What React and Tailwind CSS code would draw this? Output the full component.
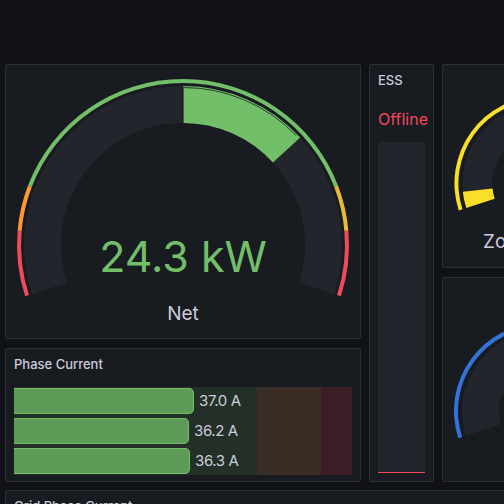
import React from 'react';

// gauge geometry helpers, angle 0 = 12 o'clock, clockwise positive
function pt(cx, cy, r, a) {
  const t = (a * Math.PI) / 180;
  return [cx + r * Math.sin(t), cy - r * Math.cos(t)];
}

function band(cx, cy, r1, r2, a0, a1) {
  const [x0, y0] = pt(cx, cy, r2, a0);
  const [x1, y1] = pt(cx, cy, r2, a1);
  const [x2, y2] = pt(cx, cy, r1, a1);
  const [x3, y3] = pt(cx, cy, r1, a0);
  const large = a1 - a0 > 180 ? 1 : 0;
  return `M${x0} ${y0} A${r2} ${r2} 0 ${large} 1 ${x1} ${y1} L${x2} ${y2} A${r1} ${r1} 0 ${large} 0 ${x3} ${y3} Z`;
}

function arcLine(cx, cy, r, a0, a1) {
  const [x0, y0] = pt(cx, cy, r, a0);
  const [x1, y1] = pt(cx, cy, r, a1);
  return `M${x0} ${y0} A${r} ${r} 0 0 1 ${x1} ${y1}`;
}

const FONT = "Inter, 'Liberation Sans', sans-serif";

function Panel({ title, className = '', children }) {
  return (
    <div className={`bg-[#181b1f] border border-[#2b2e33] rounded-[2px] overflow-hidden flex flex-col ${className}`}>
      {title && (
        <div className="h-8 shrink-0 flex items-center px-2 text-[13px] font-medium text-[#ccccdc] whitespace-nowrap">
          {title}
        </div>
      )}
      {children}
    </div>
  );
}

function NetGauge() {
  const cx = 177;
  const cy = 180;
  const segs = [
    [-108, -85, '#f2495c'],
    [-85, -69, '#ff9830'],
    [-69, 69, '#73bf69'],
    [69, 85, '#eab839'],
    [85, 108, '#f2495c'],
  ];
  return (
    <svg width="354" height="273" viewBox="0 0 354 273">
      {segs.map(([a0, a1, c]) => (
        <path key={a0} d={band(cx, cy, 162, 166, a0, a1)} fill={c} />
      ))}
      <path d={band(cx, cy, 122, 159, -108, 108)} fill="#22252b" />
      <path d={band(cx, cy, 122, 159, 0, 47.5)} fill="#73bf69" />
      <path d={arcLine(cx, cy, 157.5, 0, 46)} stroke="#1a1d21" strokeWidth="0.8" fill="none" />
      <line x1={cx} y1={cy - 122} x2={cx} y2={cy - 158} stroke="#1a1d21" strokeWidth="1.2" />
      <text x={cx} y="207" textAnchor="middle" fontFamily={FONT} fontSize="43" fill="#73bf69">
        24.3 kW
      </text>
      <text x={cx} y="255" textAnchor="middle" fontFamily={FONT} fontSize="19" fill="#ccccdc">
        Net
      </text>
    </svg>
  );
}

function SmallGauge({ cy, color, rIn, value, valueTo, label }) {
  const cx = 99;
  return (
    <svg width="198" height="203" viewBox="0 0 198 203">
      <path d={band(cx, cy, 84, 88, -108, 108)} fill={color} />
      <path d={band(cx, cy, rIn, 80, -108, 108)} fill="#22252b" />
      {valueTo && <path d={band(cx, cy, rIn, 80, -108, valueTo)} fill={color} />}
      {value && (
        <text x={cx} y={cy + 14} textAnchor="middle" fontFamily={FONT} fontSize="20" fill={color}>
          {value}
        </text>
      )}
      {label && (
        <text x={cx + 5} y={cy + 65} textAnchor="middle" fontFamily={FONT} fontSize="19" fill="#ccccdc">
          {label}
        </text>
      )}
    </svg>
  );
}

const phases = [
  { w: 180, v: '37.0 A' },
  { w: 175, v: '36.2 A' },
  { w: 176, v: '36.3 A' },
];

export default function App() {
  return (
    <div className="w-[504px] h-[504px] overflow-hidden bg-[#111217] pt-16 pl-[5px] font-[family-name:Inter,'Liberation_Sans',sans-serif]">
      <div className="flex gap-2">
        {/* left column */}
        <div className="w-[356px] shrink-0 flex flex-col gap-[9px]">
          <Panel className="h-[275px]">
            <NetGauge />
          </Panel>

          <Panel title="Phase Current" className="h-[134px]">
            <div className="relative mx-2 mt-1.5 h-[88px]">
              <div className="absolute inset-0 flex">
                <div className="w-[243px] bg-[#243027]"></div>
                <div className="w-[64px] bg-[#3a2d26]"></div>
                <div className="flex-1 bg-[#3c1e28]"></div>
              </div>
              <div className="relative flex flex-col gap-1 pt-px">
                {phases.map((p) => (
                  <div key={p.v} className="h-[26px] flex items-center">
                    <div
                      className="h-full bg-[#5f9b58] border border-l-0 border-[#73bf69] rounded-r-[5px]"
                      style={{ width: p.w }}
                    ></div>
                    <span className="ml-[5px] text-[15px] text-[#ccccdc] tracking-tight">{p.v}</span>
                  </div>
                ))}
              </div>
            </div>
          </Panel>
        </div>

        {/* ESS */}
        <Panel title="ESS" className="w-[65px] h-[418px] shrink-0">
          <div className="px-2 pt-3 pb-[13px] text-[16px] leading-5 text-[#f2495c]">Offline</div>
          <div className="mx-2 mb-2 flex-1 bg-[#22252b] flex flex-col justify-end">
            <div className="h-px bg-[#f2495c]"></div>
          </div>
        </Panel>

        {/* right column */}
        <div className="w-[200px] shrink-0 flex flex-col gap-[9px]">
          <Panel className="h-[204px]">
            <SmallGauge cy={119} color="#fade2a" rIn={50} value="1.06 kW" valueTo={-96} label="Zonnepanelen" />
          </Panel>
          <Panel className="h-[205px]">
            <SmallGauge cy={133} color="#3274d9" rIn={43} />
          </Panel>
        </div>
      </div>

      <div className="mt-2 w-[520px]">
        <Panel title="Grid Phase Current" className="h-[120px]" />
      </div>
    </div>
  );
}
